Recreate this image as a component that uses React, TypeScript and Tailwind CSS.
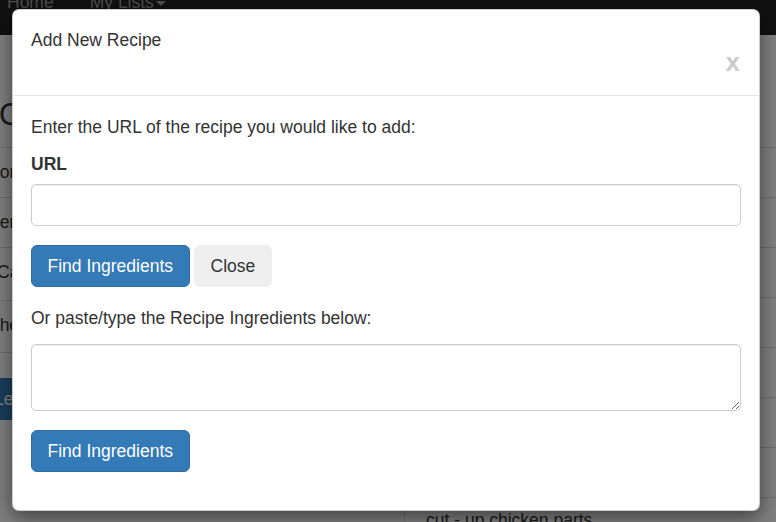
import React from "react";

const rowsRight = [0, 1, 2, 3, 4, 5, 6];

export default function App() {
  return (
    <div
      className="relative w-[776px] h-[522px] overflow-hidden bg-white text-[#333]"
      style={{ fontFamily: '"Liberation Sans", Arial, sans-serif' }}
    >
      {/* Background page */}
      <div className="flex flex-col">
        <div className="h-[35px] bg-[#222] flex items-start gap-[36px] pl-[7px] text-[17.5px] leading-[25px] text-[#9d9d9d]">
          <span className="mt-[-10px]">Home</span>
          <span className="mt-[-10px] flex items-center gap-[2px]">
            My Lists
            <span className="inline-block w-0 h-0 border-l-[5px] border-r-[5px] border-t-[5px] border-l-transparent border-r-transparent border-t-[#9d9d9d] mt-[2px]"></span>
          </span>
        </div>
        <div className="flex">
          <div className="w-[404px] flex flex-col overflow-hidden">
            <div className="h-[112px] flex items-start pt-[63px] text-[31px] leading-[34px] ml-[-1px] whitespace-nowrap">
              <span>Our Recipes</span>
            </div>
            <div className="h-[50px] border-t border-[#ddd] pt-[12px] ml-[-12px] text-[17.5px] leading-[25px] whitespace-nowrap">Pork Loin</div>
            <div className="h-[50px] border-t border-[#ddd] pt-[12px] ml-[-12px] text-[17.5px] leading-[25px] whitespace-nowrap">Berry Pie</div>
            <div className="h-[53px] border-t border-[#ddd] pt-[12px] ml-[-3px] text-[17.5px] leading-[25px] whitespace-nowrap">Casserole</div>
            <div className="h-[52px] border-t border-[#ddd] pt-[12px] ml-[-13px] text-[17.5px] leading-[25px] whitespace-nowrap">Chef Salad</div>
            <div className="border-t border-[#ddd] pt-[25px]">
              <div className="w-[120px] h-[42px] ml-[-60px] bg-[#337ab7] text-white rounded-[6px] text-[17.5px] leading-[42px] pl-[54px]">Lemon</div>
            </div>
          </div>
          <div className="flex-1 flex flex-col border-l border-[#ddd] mt-[112px]">
            {rowsRight.map((i) => (
              <div key={i} className="h-[50px] border-t border-[#ddd]"></div>
            ))}
            <div className="h-[50px] border-t border-[#ddd] pt-[10px] pl-[21px] text-[17.5px] leading-[25px]">
              cut - up chicken parts
            </div>
          </div>
        </div>
      </div>

      {/* Backdrop */}
      <div className="absolute inset-0 bg-black/50"></div>

      {/* Modal */}
      <div className="absolute left-[12px] top-[9px] w-[748px] bg-white border border-black/20 rounded-[7px] shadow-[0_6px_19px_rgba(0,0,0,0.5)] flex flex-col">
        <div className="px-[18px] pt-[18px] pb-[20px] border-b border-[#e5e5e5] flex flex-col">
          <h4 className="text-[17.5px] leading-[25px] text-[#333] m-0">Add New Recipe</h4>
          <div className="flex justify-end mt-[-4px] h-[26px]">
            <span className="text-[26px] leading-[26px] font-bold text-[#ccc] mr-[1px]">x</span>
          </div>
        </div>
        <div className="px-[18px] pt-[19px] pb-[38px] flex flex-col text-[17.5px] leading-[25px]">
          <p className="mb-[12px]">Enter the URL of the recipe you would like to add:</p>
          <label className="font-bold mb-[7px]">URL</label>
          <input
            type="text"
            className="h-[42px] w-full border border-[#ccc] rounded-[5px] shadow-[inset_0_1px_1px_rgba(0,0,0,0.075)] px-[15px] mb-[19px] outline-none"
          />
          <div className="flex gap-[4px] mb-[19px]">
            <button className="h-[42px] px-[15.5px] bg-[#337ab7] border border-[#2e6da4] text-white rounded-[6px] text-[17.5px] leading-[25px]">
              Find Ingredients
            </button>
            <button className="h-[42px] px-[16px] bg-[#efefef] border border-[#efefef] text-[#333] rounded-[6px] text-[17.5px] leading-[25px]">
              Close
            </button>
          </div>
          <p className="mb-[13px]">Or paste/type the Recipe Ingredients below:</p>
          <textarea className="h-[67px] w-full border border-[#ccc] rounded-[5px] shadow-[inset_0_1px_1px_rgba(0,0,0,0.075)] px-[15px] py-[8px] mb-[19px] outline-none block"></textarea>
          <div className="flex">
            <button className="h-[42px] px-[15.5px] bg-[#337ab7] border border-[#2e6da4] text-white rounded-[6px] text-[17.5px] leading-[25px]">
              Find Ingredients
            </button>
          </div>
        </div>
      </div>
    </div>
  );
}
